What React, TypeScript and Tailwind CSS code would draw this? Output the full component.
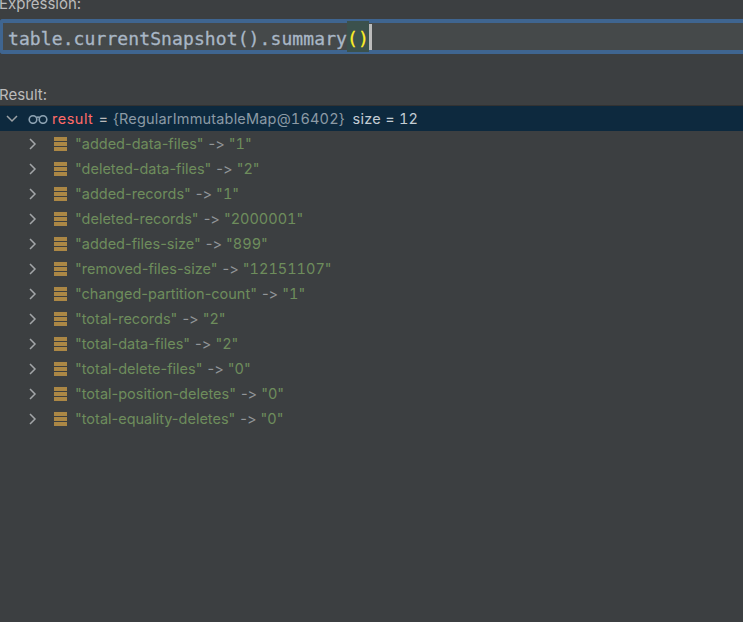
const entries = [
  ["added-data-files", "1"],
  ["deleted-data-files", "2"],
  ["added-records", "1"],
  ["deleted-records", "2000001"],
  ["added-files-size", "899"],
  ["removed-files-size", "12151107"],
  ["changed-partition-count", "1"],
  ["total-records", "2"],
  ["total-data-files", "2"],
  ["total-delete-files", "0"],
  ["total-position-deletes", "0"],
  ["total-equality-deletes", "0"],
];

function FieldIcon() {
  return (
    <div className="w-[13px] flex flex-col gap-[1px] shrink-0">
      <div className="h-[4px] bg-[#ab8745]" />
      <div className="h-[4px] bg-[#ab8745]" />
      <div className="h-[4px] bg-[#ab8745]" />
    </div>
  );
}

export default function App() {
  return (
    <div
      className="w-[743px] h-[622px] overflow-hidden bg-[#3c3f41] text-[14.5px] text-[#bbbbbb] [font-feature-settings:'calt'_0]"
      style={{ fontFamily: "Inter, 'Liberation Sans', sans-serif" }}
    >
      <div className="h-[19px] -mt-[6px] -ml-[1px] leading-[19px] text-[15px]">Expression:</div>
      <div className="mt-[6px] h-[35px] border-y-[4px] border-l-[3px] rounded-l-[3px] border-[#3f6590] bg-[#45494a] pl-[5px] flex items-center font-['DejaVu_Sans_Mono',monospace] text-[18px] tracking-[0.1px] text-[#a9b7c6] [-webkit-text-stroke:0.3px]">
        <span className="pt-[4px]">table.currentSnapshot().summary</span>
        <span className="bg-[#3b514d] text-[#ffef28] pt-[4px]">()</span>
        <span className="w-[3px] h-[26px] bg-[#bbbbbb]" />
      </div>
      <div className="mt-[31px] h-[19px] -ml-[1px] leading-[19px] text-[15px]">Result:</div>
      <div className="h-[26px] mt-[1px] bg-[#0d293e] border-t border-[#323232] flex items-center tracking-[0.25px]">
        <svg width="12" height="8" viewBox="0 0 12 8" className="ml-[6px] shrink-0" fill="none" stroke="#9da2a6" strokeWidth="1.5">
          <path d="M1 1l5 5 5-5" />
        </svg>
        <svg width="20" height="10" viewBox="0 0 20 10" className="ml-[10px] shrink-0" fill="none" stroke="#8ea3b3" strokeWidth="1.6">
          <circle cx="5" cy="5.5" r="3.8" />
          <circle cx="15" cy="5.5" r="3.8" />
          <path d="M8.5 3.5q1.500-1 3 0" />
        </svg>
        <span className="ml-[4px] text-[#ff6b68] tracking-[0.5px]">result</span>
        <span className="ml-[5px]">=</span>
        <span className="ml-[5px] text-[#8c9aa5] tracking-[0.18px] tabular-nums">{"{RegularImmutableMap@16402}"}</span>
        <span className="ml-[8px] text-[#c4cdd4] tabular-nums">size = 12</span>
      </div>
      <div>
        {entries.map(([key, value]) => (
          <div key={key} className="h-[25px] flex items-center">
            <svg width="8" height="12" viewBox="0 0 8 12" className="ml-[29px] shrink-0" fill="none" stroke="#a3a6a8" strokeWidth="1.5">
              <path d="M1 1l5 5-5 5" />
            </svg>
            <div className="ml-[17px]">
              <FieldIcon />
            </div>
            <span className="ml-[8px] text-[#6e8d5c]">"{key}"</span>
            <span className="ml-[5px] text-[#929699]">-&gt;</span>
            <span className="ml-[4px] text-[#6e8d5c] tabular-nums">"{value}"</span>
          </div>
        ))}
      </div>
    </div>
  );
}
